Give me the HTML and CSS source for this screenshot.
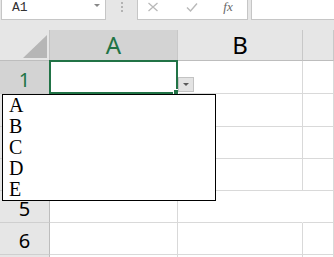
FILE: index.html
```html
<!DOCTYPE html>
<html>
	<head>
		<meta charset="UTF-8">
		<title>数据验证下拉</title>
		<link rel="stylesheet" href="styles.css">
	</head>
	<body>
		<div class="app">
			<div class="formula_bar">
				<div class="name_box">
					<span class="ref">A1</span>
					<span class="caret"></span>
				</div>
				<div class="grip"><i></i><i></i><i></i></div>
				<div class="fx_box">
					<span class="slot">
						<svg width="12" height="10" viewBox="0 0 12 10"><path d="M1.5 1 L10.5 9 M10.5 1 L1.5 9" stroke="#b9b9b9" stroke-width="1.3" fill="none"/></svg>
					</span>
					<span class="slot">
						<svg width="12" height="10" viewBox="0 0 12 10"><path d="M1 5.5 L4.5 9 L11 1.5" stroke="#b9b9b9" stroke-width="1.4" fill="none"/></svg>
					</span>
					<span class="slot fx">fx</span>
				</div>
				<div class="formula_input"></div>
			</div>

			<div class="sheet">
				<div class="cell corner">
					<svg width="50" height="30" viewBox="0 0 50 30"><polygon points="47,5 47,28 23,28" fill="#b6b6b6"/></svg>
				</div>
				<div class="cell col_head on">A</div>
				<div class="cell col_head">B</div>
				<div class="cell col_head last"></div>

				<div class="cell row_head on">1</div>
				<div class="cell"></div><div class="cell"></div><div class="cell"></div>
				<div class="cell row_head"></div>
				<div class="cell"></div><div class="cell"></div><div class="cell"></div>
				<div class="cell row_head"></div>
				<div class="cell"></div><div class="cell"></div><div class="cell"></div>
				<div class="cell row_head"></div>
				<div class="cell"></div><div class="cell"></div><div class="cell"></div>
				<div class="cell row_head">5</div>
				<div class="cell"></div><div class="cell no_right"></div><div class="cell"></div>
				<div class="cell row_head">6</div>
				<div class="cell"></div><div class="cell"></div><div class="cell"></div>
				<div class="cell row_head"></div>
				<div class="cell"></div><div class="cell"></div><div class="cell"></div>
			</div>

			<div class="selection"><span class="handle"></span></div>
			<div class="dd_btn"><span></span></div>
			<div class="list">
				<div>A</div>
				<div>B</div>
				<div>C</div>
				<div>D</div>
				<div>E</div>
			</div>
		</div>
	</body>
</html>
```

FILE: styles.css
```css
body{margin: 0; background: #e6e6e6; overflow: hidden;}
.app{position: relative; width: 334px; height: 257px; overflow: hidden;}

/* 编辑栏 */
.formula_bar{display: flex; height: 20px;}
.name_box{width: 105px; margin-left: 1px; box-sizing: border-box; background: #fff; border: 1px solid #c6c6c6; border-top: none;
	display: flex; align-items: flex-start; justify-content: space-between; padding: 1px 5px 0 10px;}
.name_box .ref{font: 13px/14px "Liberation Mono", monospace; color: #333;}
.name_box .caret{width: 0; height: 0; margin-top: 3px; border-left: 3px solid transparent; border-right: 3px solid transparent; border-top: 3px solid #888;}
.grip{width: 31px; display: flex; flex-direction: column; align-items: center; gap: 2px; padding-top: 2px; box-sizing: border-box;}
.grip i{width: 2px; height: 2px; background: #b3b3b3;}
.fx_box{width: 111px; box-sizing: border-box; background: #fff; border: 1px solid #c6c6c6; border-top: none; display: flex; align-items: flex-start; padding-top: 2px;}
.fx_box .slot{width: 30px; display: flex; justify-content: center;}
.fx_box .slot:nth-child(2){margin-left: 9px;}
.fx_box .slot:nth-child(3){margin-left: 6px;}
.fx_box .fx{font: italic 13px/12px "Liberation Serif", serif; color: #666; margin-top: -1px;}
.formula_input{flex: 1; margin-left: 3px; background: #fff; border-left: 1px solid #c6c6c6; border-bottom: 1px solid #c6c6c6;}

/* 表格 */
.sheet{margin-top: 10px; display: grid; grid-template-columns: 50px 128px 125px 1fr;
	grid-template-rows: 31px 33px 33px 32px 32px 32px 32px 32px; background: #fff;}
.cell{box-sizing: border-box; border-right: 1px solid #d9d9d9; border-bottom: 1px solid #d9d9d9; background: #fff;}
.cell.no_right{border-right-color: #fff;}
.corner{background: #e6e6e6; border-right: 1px solid #c3c3c3; border-bottom: 1px solid #bdbdbd;}
.corner svg{display: block;}
.col_head{background: #e6e6e6; border-right: 1px solid #c8c8c8; border-bottom: 1px solid #bdbdbd;
	display: flex; align-items: center; justify-content: center; font: 24px/1 "Noto Sans", sans-serif; color: #000;}
.row_head{background: #e6e6e6; border-right: 1px solid #bdbdbd; border-bottom: 1px solid #cfcfcf;
	display: flex; align-items: center; justify-content: center; padding-top: 5px; font: 20px/1 "Noto Sans", sans-serif; color: #000;}
.col_head.on,.row_head.on{background: #d3d3d3; color: #217346;}

/* 选中单元格 */
.selection{position: absolute; left: 49px; top: 60px; width: 129px; height: 34px; box-sizing: border-box; border: 2px solid #217346;}
.selection .handle{position: absolute; right: -3px; bottom: -3px; width: 4px; height: 4px; background: #217346; border: 1px solid #fff;}
.dd_btn{position: absolute; left: 178px; top: 77px; width: 16px; height: 15px; box-sizing: border-box; background: #e3e3e3; border: 1px solid #c3c3c3;
	display: flex; align-items: center; justify-content: center;}
.dd_btn span{width: 0; height: 0; border-left: 3px solid transparent; border-right: 3px solid transparent; border-top: 3px solid #5a5a5a;}

/* 下拉列表 */
.list{position: absolute; left: 2px; top: 94px; width: 214px; height: 107px; box-sizing: border-box; background: #fff; border: 1px solid #000;
	padding-left: 6px; font: 20px/21px "Liberation Serif", serif; color: #000;}
```
